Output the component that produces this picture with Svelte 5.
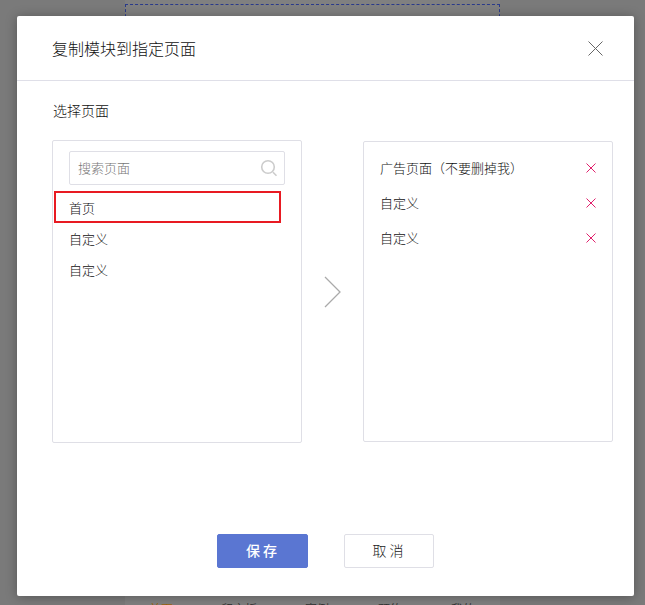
<script>
  const sources = ['首页', '自定义', '自定义'];
  const targets = ['广告页面（不要删掉我）', '自定义', '自定义'];
  const tabs = ['首页', '留言板', '案例', '预约', '我的'];
</script>

<div class="screen">
  <div class="phone">
    <div class="outline"></div>
    <nav>
      {#each tabs as tab, i}
        <span class:current={i === 0}>{tab}</span>
      {/each}
    </nav>
  </div>
  <div class="dialog">
    <header>
      <h1>复制模块到指定页面</h1>
      <svg class="close" width="15" height="15" viewBox="0 0 15 15"><path d="M.5 .5L14.5 14.5M14.5 .5L.5 14.5" /></svg>
    </header>
    <h2>选择页面</h2>
    <div class="transfer">
      <section class="panel left">
        <label class="search">
          <input placeholder="搜索页面" />
          <svg width="18" height="18" viewBox="0 0 18 18"><circle cx="8" cy="8" r="6.3" /><path d="M13 13.2L16.5 16.7" /></svg>
        </label>
        <ul>
          {#each sources as name, i}
            <li class:marked={i === 0}>{name}</li>
          {/each}
        </ul>
      </section>
      <svg class="arrow" width="18" height="32" viewBox="0 0 18 32"><path d="M1 1L16 16L1 31" /></svg>
      <section class="panel right">
        <ul>
          {#each targets as name}
            <li>
              <span>{name}</span>
              <svg width="10" height="10" viewBox="0 0 10 10"><path d="M.5 .5L9.5 9.5M9.5 .5L.5 9.5" /></svg>
            </li>
          {/each}
        </ul>
      </section>
    </div>
    <footer>
      <button class="save">保 存</button>
      <button class="cancel">取 消</button>
    </footer>
  </div>
</div>

<style>
  .screen {
    position: relative;
    box-sizing: border-box;
    width: 645px;
    height: 605px;
    padding: 16px 0 0 17px;
    overflow: hidden;
    background: #7a7a7a;
    color: #111;
    font-family: "Noto Sans CJK SC", sans-serif;
    font-weight: 300;
  }
  .phone {
    position: absolute;
    inset: 0 145px 0 125px;
    background: #808080;
  }
  .outline {
    box-sizing: border-box;
    height: 100px;
    margin-top: 4px;
    border: 1px dashed #2a3a8a;
  }
  nav {
    position: absolute;
    top: 601px;
    left: 0;
    width: 100%;
    display: grid;
    grid-template-columns: 72px 84px 72px 74px 72px;
    color: #333;
    font-size: 12px;
    line-height: 16px;
    text-align: center;
    font-weight: 400;
  }
  .current { color: #9c6410; }
  .dialog {
    position: relative;
    display: flex;
    flex-direction: column;
    box-sizing: border-box;
    width: 617px;
    height: 580px;
    border-radius: 2px;
    background: #fff;
    box-shadow: 0 1px 12px rgba(0, 0, 0, .3);
  }
  header {
    display: flex;
    align-items: center;
    justify-content: space-between;
    box-sizing: border-box;
    height: 65px;
    padding: 0 31px 0 35px;
    border-bottom: 1px solid #dfdfe8;
  }
  h1 {
    margin: 0;
    font-size: 16px;
    line-height: 24px;
    font-weight: 300;
  }
  svg {
    flex: none;
    fill: none;
    stroke: #666;
    stroke-width: 1;
  }
  .close { margin-top: 1px; }
  h2 {
    margin: 18px 0 0 36px;
    font-size: 14px;
    line-height: 22px;
    font-weight: 300;
  }
  .transfer {
    display: flex;
    align-items: flex-start;
    margin: 19px 0 0 35px;
  }
  .panel {
    box-sizing: border-box;
    width: 250px;
    border: 1px solid #dfdfe6;
    border-radius: 2px;
  }
  .left { height: 303px; }
  .right {
    height: 301px;
    margin: 1px 0 0 21px;
    padding: 8px 16px;
  }
  .search {
    display: flex;
    align-items: center;
    box-sizing: border-box;
    width: 216px;
    height: 34px;
    margin: 10px 0 0 16px;
    padding: 0 6px 0 8px;
    border: 1px solid #dfdfe6;
    border-radius: 2px;
  }
  .search input {
    flex: 1;
    min-width: 0;
    margin-bottom: 2px;
    padding: 0;
    border: 0;
    outline: 0;
    background: none;
    font: 300 13px "Noto Sans CJK SC", sans-serif;
  }
  input::placeholder { color: #777; }
  .search svg {
    stroke: #ccc;
    stroke-width: 1.6;
  }
  ul {
    margin: 0;
    padding: 0;
    list-style: none;
    font-size: 13px;
  }
  .left ul { padding-top: 6px; }
  .left li {
    box-sizing: border-box;
    width: 227px;
    height: 31px;
    margin-left: 1px;
    padding-left: 15px;
    line-height: 32px;
  }
  .left li.marked {
    height: 32px;
    padding-left: 13px;
    border: 2px solid #e81a22;
    line-height: 30px;
  }
  .arrow {
    margin: 136px 0 0 22px;
    stroke: #aaa;
    stroke-width: 1.3;
  }
  .right li {
    display: flex;
    align-items: center;
    justify-content: space-between;
    height: 35px;
  }
  .right li svg {
    margin-top: 1px;
    stroke: #e0206c;
  }
  footer {
    display: flex;
    gap: 36px;
    margin: auto 0 28px 200px;
  }
  button {
    box-sizing: border-box;
    height: 34px;
    padding: 0 2px 2px 0;
    border: 1px solid #dfdfe6;
    border-radius: 2px;
    background: #fff;
    color: #222;
    font: 400 14px "Noto Sans CJK SC", sans-serif;
  }
  .save {
    width: 91px;
    border-color: #5a76d2;
    background: #5a76d2;
    color: #fff;
    font-weight: 500;
  }
  .cancel {
    width: 90px;
    font-weight: 300;
  }
</style>
